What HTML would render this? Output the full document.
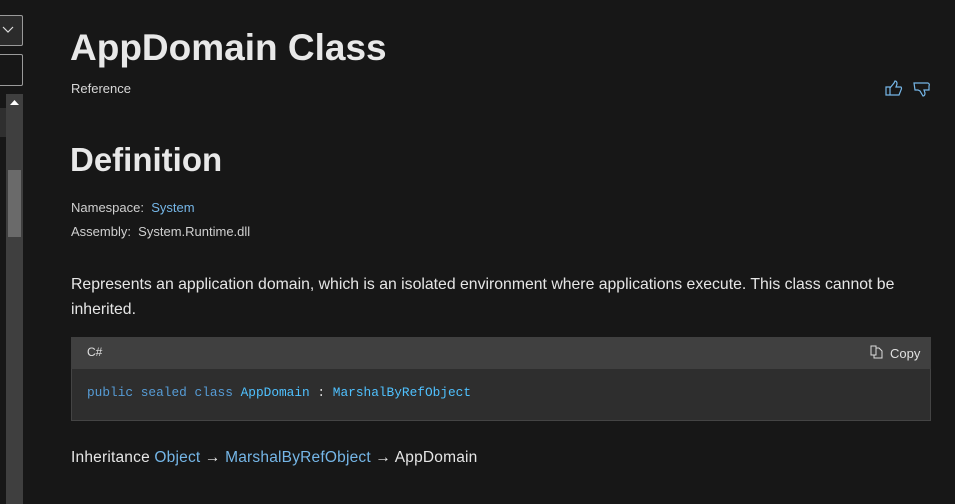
<!DOCTYPE html>
<html><head><meta charset="utf-8"><style>
*{margin:0;padding:0;box-sizing:border-box}
body{width:955px;height:504px;background:#171717;overflow:hidden;position:relative;font-family:"Segoe UI","Liberation Sans",sans-serif;color:#e6e6e6}
.a{position:absolute}
a,.l{color:#75b6e7}
</style></head><body>
<div class="a" style="left:-4px;top:15px;width:27px;height:31px;border:1px solid #9a9a9a;border-radius:2px;background:#2b2b2b"></div>
<svg class="a" style="left:2px;top:26px" width="12" height="8"><path d="M1 1 L6 6 L11 1" stroke="#ddd" fill="none" stroke-width="1.2"/></svg>
<div class="a" style="left:-4px;top:54px;width:27px;height:32px;border:1px solid #9a9a9a;border-radius:2px;background:#171717"></div>
<div class="a" style="left:0;top:108px;width:6px;height:29px;background:#2f2f2f"></div>
<div class="a" style="left:6px;top:94px;width:17px;height:410px;background:#3f3f3f"></div>
<div class="a" style="left:8px;top:170px;width:13px;height:67px;background:#6a6a6a"></div>
<svg class="a" style="left:10px;top:100px" width="9" height="6"><path d="M0 5 L4.5 0 L9 5Z" fill="#fff"/></svg>
<div class="a l" style="left:71px;top:-16px;font-size:14px;white-space:nowrap">Docs &nbsp;/&nbsp; .NET &nbsp;/&nbsp; .NET API browser &nbsp;/&nbsp; System &nbsp;/</div>
<div class="a" style="left:70px;top:27px;font-size:37px;font-weight:600;color:#e8e8e8;white-space:nowrap">AppDomain Class</div>
<div class="a" style="left:71px;top:81px;font-size:13px;color:#d8d8d8">Reference</div>
<svg class="a" style="left:885px;top:80px" width="18" height="17"><path d="M1 7 H5 V15 H1Z M5 8 L9 3 L10 1 Q12 1 12 4 L11 7 H16 Q17 8 16 10 L14 15 H5" stroke="#75b6e7" fill="none" stroke-width="1.2"/></svg>
<svg class="a" style="left:913px;top:82px" width="18" height="17"><path d="M1 1 H15 Q17 2 16 4 L16 8 H11 L12 11 Q12 14 10 14 L7 9 L5 8 H2Z" stroke="#75b6e7" fill="none" stroke-width="1.2"/></svg>
<div class="a" style="left:70px;top:141px;font-size:33px;font-weight:600;color:#e8e8e8">Definition</div>
<div class="a" style="left:71px;top:200px;font-size:13px;color:#d0d0d0">Namespace:&nbsp; <span class="l">System</span></div>
<div class="a" style="left:71px;top:224px;font-size:13px;color:#d0d0d0">Assembly:&nbsp; System.Runtime.dll</div>
<div class="a" style="left:71px;top:272px;font-size:15.8px;line-height:25px;width:860px;color:#e6e6e6">Represents an application domain, which is an isolated environment where applications execute. This class cannot be inherited.</div>
<div class="a" style="left:71px;top:337px;width:860px;height:84px;background:#2e2e2e;border:1px solid #444"></div>
<div class="a" style="left:71px;top:337px;width:860px;height:32px;background:#404040"></div>
<div class="a" style="left:87px;top:345px;font-size:12px;color:#e0e0e0">C#</div>
<svg class="a" style="left:870px;top:345px" width="13" height="14"><path d="M1 1 H6 V10 H1Z M6 3 H9 L12 6 V13 H4 V10" stroke="#ddd" fill="none" stroke-width="1"/></svg>
<div class="a" style="left:890px;top:346px;font-size:13px;color:#e0e0e0">Copy</div>
<div class="a" style="left:87px;top:385px;font-family:'Liberation Mono',monospace;font-size:12.8px;white-space:nowrap"><span style="color:#569cd6">public sealed class</span> <span style="color:#4fc1ff">AppDomain</span> <span style="color:#ddd">:</span> <span style="color:#4fc1ff">MarshalByRefObject</span></div>
<div class="a" style="left:71px;top:449px;font-size:15.5px;white-space:nowrap;color:#e6e6e6;letter-spacing:0.2px">Inheritance <span class="l">Object</span> → <span class="l">MarshalByRefObject</span> → AppDomain</div>
</body></html>
